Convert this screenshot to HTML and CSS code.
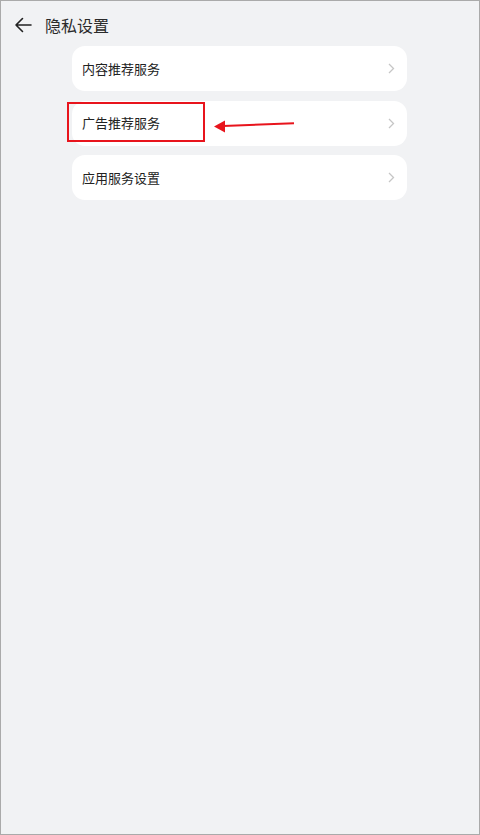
FILE: index.html
```html
<!DOCTYPE html>
<html lang="zh-CN">
<head>
<meta charset="utf-8">
<title>隐私设置</title>
<link rel="stylesheet" href="styles.css">
</head>
<body>
<div class="page">
  <header class="topbar">
    <svg class="back" width="18" height="16" viewBox="0 0 18 16" aria-hidden="true">
      <path d="M17 8H2M8.5 1.5L2 8l6.5 6.5" fill="none" stroke="#222" stroke-width="1.6" stroke-linecap="round" stroke-linejoin="round"/>
    </svg>
    <h1 class="title">隐私设置</h1>
  </header>
  <main class="list">
    <div class="item"><span class="label">内容推荐服务</span><svg class="chev" width="7" height="11" viewBox="0 0 7 11"><path d="M1 1l4.5 4.5L1 10" fill="none" stroke="#c6c6c6" stroke-width="1.3"/></svg></div>
    <div class="item"><span class="label">广告推荐服务</span><svg class="chev" width="7" height="11" viewBox="0 0 7 11"><path d="M1 1l4.5 4.5L1 10" fill="none" stroke="#c6c6c6" stroke-width="1.3"/></svg></div>
    <div class="item"><span class="label">应用服务设置</span><svg class="chev" width="7" height="11" viewBox="0 0 7 11"><path d="M1 1l4.5 4.5L1 10" fill="none" stroke="#c6c6c6" stroke-width="1.3"/></svg></div>
  </main>
  <div class="highlight"></div>
  <svg class="pointer" width="90" height="20" viewBox="0 0 90 20" aria-hidden="true">
    <line x1="9" y1="6" x2="80" y2="3.2" stroke="#e8141c" stroke-width="2"/>
    <polygon points="0,6.5 11,0.5 11,12.5" fill="#e8141c"/>
  </svg>
</div>
</body>
</html>
```
FILE: styles.css
```css
html, body {
  margin: 0;
  padding: 0;
}
body {
  font-family: "Noto Sans CJK SC", "Noto Sans", sans-serif;
  background: #f1f2f4;
}
.page {
  position: relative;
  box-sizing: border-box;
  width: 480px;
  height: 835px;
  border: 1px solid #aaaaaa;
  background: #f1f2f4;
}
.topbar {
  display: flex;
  align-items: center;
  height: 47px;
  padding-left: 13px;
  padding-top: 1px;
  box-sizing: border-box;
}
.back {
  display: block;
}
.title {
  margin: 0 0 0 13px;
  font-size: 16px;
  font-weight: 400;
  color: #2a2a2a;
  line-height: 20px;
}
.list {
  display: flex;
  flex-direction: column;
  gap: 9.5px;
  margin-left: 71px;
  width: 335px;
  margin-top: -2px;
}
.item {
  display: flex;
  align-items: center;
  justify-content: space-between;
  height: 45px;
  background: #ffffff;
  border-radius: 13px;
  padding: 0 12px 0 10px;
  box-sizing: border-box;
}
.label {
  font-size: 13px;
  color: #222;
  line-height: 16px;
}
.chev {
  display: block;
}
.highlight {
  position: absolute;
  left: 66px;
  top: 101px;
  width: 134px;
  height: 36px;
  border: 2px solid #e8141c;
}
.pointer {
  position: absolute;
  left: 213px;
  top: 119px;
}
```
